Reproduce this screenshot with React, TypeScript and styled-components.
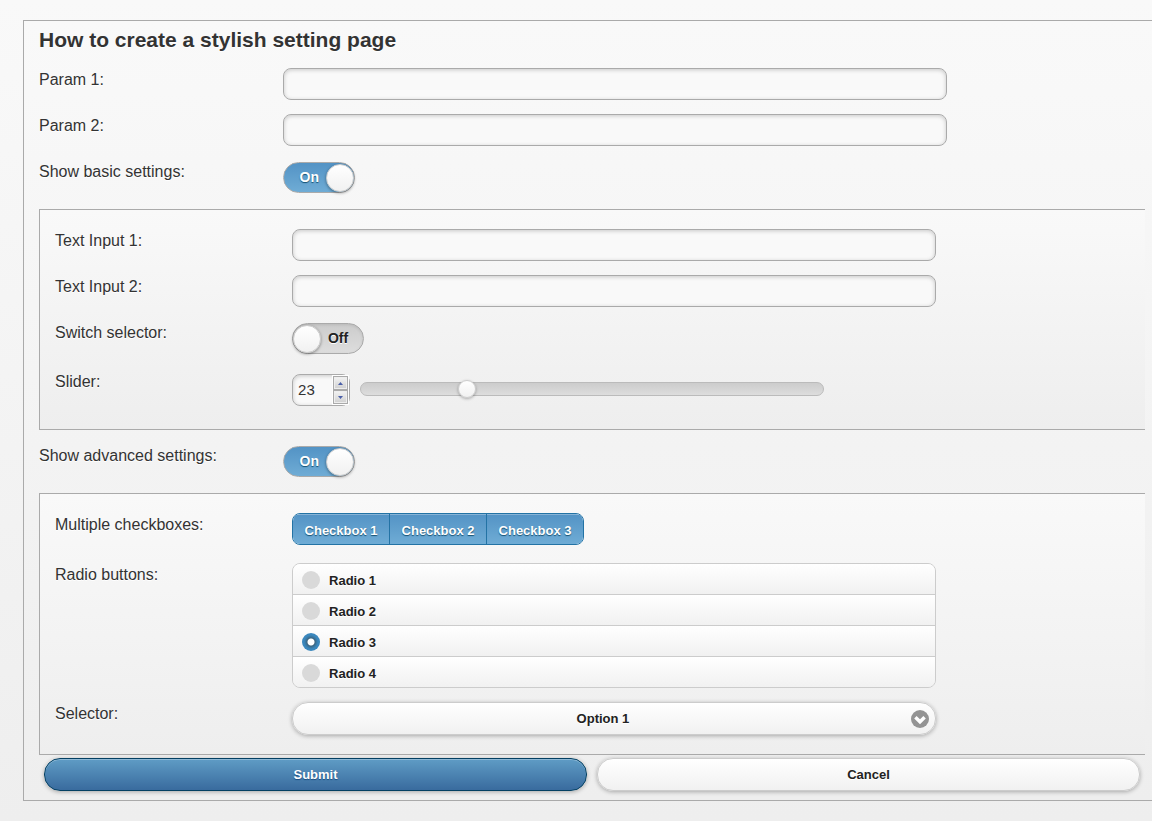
import React, { useId, useState } from "react";
import styled, { createGlobalStyle } from "styled-components";

const GlobalStyle = createGlobalStyle`
  *, *::before, *::after { box-sizing: border-box; }
  html { min-height: 100%; background: linear-gradient(#f9f9f9, #eeeeee); }
  body {
    margin: 0;
    color: #333;
    font-family: "Liberation Sans", Arial, Helvetica, sans-serif;
    font-size: 16px;
    line-height: 20px;
    text-shadow: 0 1px 0 #fff;
  }
  input, select, button { font-family: inherit; }
`;

const Page = styled.form`
  margin: 20px 0 20px 23px;
  padding: 0 7px 9px 15px;
  border: 1px solid #aaa;
  border-right: 0;
  background: linear-gradient(#f9f9f9, #eeeeee);
`;

const Title = styled.h1`
  margin: 0;
  padding: 7px 0 16px;
  font-size: 21px;
  line-height: 24px;
`;

const Panel = styled.section`
  display: grid;
  gap: 14px;
  margin: 14px 0;
  padding: 19px 17px 19px 15px;
  border: 1px solid #aaa;
  border-right: 0;
  background: linear-gradient(#f9f9f9, #eeeeee);

  &:last-of-type { margin-bottom: 3px; }
`;

const Rows = styled.div`
  display: grid;
  gap: 14px;
`;

const Row = styled.div<{ $spaced?: boolean }>`
  display: grid;
  grid-template-columns: 22% 60%;
  column-gap: 1px;
  align-items: start;
  padding-bottom: ${(p) => (p.$spaced ? "4px" : "0")};
`;

const Label = styled.label`
  padding-top: 2px;
`;

const TextInput = styled.input`
  width: 100%;
  height: 32px;
  padding: 0 6px;
  border: 1px solid #aaa;
  border-radius: 8px;
  background: #f9f9f9;
  box-shadow: inset 0 1px 4px rgba(0, 0, 0, 0.2);
  color: #333;
  font-size: 15px;
`;

const Switch = styled.label<{ $on: boolean }>`
  display: flex;
  flex-direction: ${(p) => (p.$on ? "row" : "row-reverse")};
  align-items: center;
  width: 72px;
  height: 31px;
  margin: 2px 0;
  border: 1px solid #aaa;
  border-radius: 16px;
  background: ${(p) => (p.$on ? "linear-gradient(#5393c5, #6facd5)" : "linear-gradient(#cccccc, #dddddd)")};
  box-shadow: ${(p) => (p.$on ? "none" : "inset 0 1px 3px rgba(0, 0, 0, 0.1)")};
  color: ${(p) => (p.$on ? "#fff" : "#222")};
  font-size: 14px;
  font-weight: bold;
  text-shadow: ${(p) => (p.$on ? "0 1px 1px #145072" : "0 1px 0 #fff")};
`;

const SwitchText = styled.span<{ $on: boolean }>`
  flex: 1;
  padding: ${(p) => (p.$on ? "0 0 2px 8px" : "0 8px 2px 0")};
  text-align: center;
`;

const SwitchKnob = styled.input`
  appearance: none;
  width: 28px;
  height: 28px;
  margin: 0;
  border: 1px solid #ccc;
  border-radius: 50%;
  background: linear-gradient(#ffffff, #f1f1f1);
  box-shadow: 0 1px 3px rgba(0, 0, 0, 0.4);
`;

const SliderControl = styled.div`
  display: flex;
  align-items: center;
  gap: 10px;
  padding-top: 4px;
  padding-bottom: 4px;
`;

const NumberBox = styled.div`
  display: flex;
  align-items: center;
  flex: none;
  width: 58px;
  height: 32px;
  border: 1px solid #aaa;
  border-radius: 8px;
  background: #f9f9f9;
  box-shadow: inset 0 1px 4px rgba(0, 0, 0, 0.2);
`;

const NumberInput = styled.input`
  appearance: textfield;
  flex: 1;
  min-width: 0;
  padding: 0 0 2px 5px;
  border: 0;
  background: none;
  color: #333;
  font-size: 15px;

  &::-webkit-inner-spin-button { appearance: none; }
`;

const Stepper = styled.div`
  display: grid;
  grid-template-rows: 14px 14px;
  width: 17px;
  padding: 1px;
  background: #fff;
`;

const StepButton = styled.button`
  display: flex;
  align-items: center;
  justify-content: center;
  padding: 0;
  border: 1px solid #aaa;
  background: linear-gradient(#f4f4f4, #cfcfcf);
  box-shadow: inset 0 0 0 1px #eee;
`;

const SliderTrack = styled.div`
  display: flex;
  align-items: center;
  width: 72%;
  height: 14px;
  margin-bottom: 2px;
  border: 1px solid #bbb;
  border-radius: 7px;
  background: linear-gradient(#cccccc, #dddddd);
`;

const SliderInput = styled.input`
  appearance: none;
  flex: 1;
  height: 18px;
  margin: 0 -9px;
  background: none;

  &::-webkit-slider-thumb {
    appearance: none;
    width: 18px;
    height: 18px;
    border: 1px solid #ccc;
    border-radius: 50%;
    background: linear-gradient(#ffffff, #f1f1f1);
    box-shadow: 0 1px 3px rgba(0, 0, 0, 0.3);
  }
`;

const CheckGroup = styled.div`
  display: inline-flex;
  justify-self: start;
  height: 32px;
  overflow: hidden;
  border: 1px solid #2373a5;
  border-radius: 8px;
`;

const CheckButton = styled.label<{ $checked: boolean }>`
  display: flex;
  align-items: center;
  justify-content: center;
  position: relative;
  width: 97px;
  padding-top: 3px;
  background: ${(p) => (p.$checked ? "linear-gradient(#5393c5, #6facd5)" : "linear-gradient(#ffffff, #f1f1f1)")};
  box-shadow: inset 0 1px 0 rgba(255, 255, 255, 0.3);
  color: ${(p) => (p.$checked ? "#fff" : "#222")};
  font-size: 13px;
  font-weight: bold;
  text-shadow: ${(p) => (p.$checked ? "0 1px 1px #145072" : "0 1px 0 #fff")};

  & + & { border-left: 1px solid #2373a5; }
  &:first-child { width: 96px; }
`;

const HiddenCheck = styled.input`
  position: absolute;
  inset: 0;
  margin: 0;
  opacity: 0;
`;

const RadioGroup = styled.div`
  overflow: hidden;
  border: 1px solid #ccc;
  border-radius: 8px;
`;

const RadioRow = styled.label`
  display: flex;
  align-items: center;
  gap: 9px;
  height: 31px;
  padding: 2px 9px 0;
  background: linear-gradient(#ffffff, #f1f1f1);
  color: #222;
  font-size: 13px;
  font-weight: bold;

  & + & { border-top: 1px solid #ccc; }
  &:first-child { height: 30px; }
`;

const RadioText = styled.span`
  padding-top: 1px;
`;

const RadioInput = styled.input`
  appearance: none;
  width: 18px;
  height: 18px;
  margin: 0;
  border-radius: 50%;
  background: #d9d9d9;

  &:checked {
    background: radial-gradient(circle, #fff 3px, #3a6480 4px, #3a7399 5px, #3a87bd 7px);
  }
`;

const SelectWrap = styled.div`
  display: grid;
  align-items: center;
`;

const Select = styled.select`
  appearance: none;
  grid-area: 1 / 1;
  width: 100%;
  height: 33px;
  padding: 0 28px 1px 6px;
  border: 1px solid #ccc;
  border-radius: 16px;
  background: linear-gradient(#ffffff, #f1f1f1);
  box-shadow: 0 1px 4px rgba(0, 0, 0, 0.3);
  color: #222;
  font-size: 13px;
  font-weight: bold;
  text-align: center;
  text-align-last: center;
  text-shadow: inherit;
`;

const SelectIcon = styled.svg`
  grid-area: 1 / 1;
  justify-self: end;
  margin-right: 7px;
  pointer-events: none;
`;

const Actions = styled.div`
  display: grid;
  grid-template-columns: 1fr 1fr;
  gap: 10px;
  padding: 0 5px;
`;

const ActionButton = styled.button<{ $primary?: boolean }>`
  height: 33px;
  padding: 0;
  border: 1px solid ${(p) => (p.$primary ? "#044062" : "#ccc")};
  border-radius: 16px;
  background: ${(p) => (p.$primary ? "linear-gradient(#5f9cc5, #396b9e)" : "linear-gradient(#ffffff, #f1f1f1)")};
  box-shadow: inset 0 1px 0 rgba(255, 255, 255, 0.3), 0 1px 4px rgba(0, 0, 0, 0.3);
  color: ${(p) => (p.$primary ? "#fff" : "#222")};
  font-size: 13px;
  font-weight: bold;
  text-shadow: ${(p) => (p.$primary ? "0 1px 1px #194b7e" : "0 1px 0 #fff")};
`;

function TextField({ label }: { label: string }) {
  const id = useId();
  return (
    <Row>
      <Label htmlFor={id}>{label}</Label>
      <TextInput id={id} type="text" />
    </Row>
  );
}

function SwitchField({ label, initial }: { label: string; initial: boolean }) {
  const id = useId();
  const [on, setOn] = useState(initial);
  return (
    <Row>
      <Label htmlFor={id}>{label}</Label>
      <Switch $on={on}>
        <SwitchText $on={on}>{on ? "On" : "Off"}</SwitchText>
        <SwitchKnob id={id} type="checkbox" role="switch" checked={on} onChange={() => setOn(!on)} />
      </Switch>
    </Row>
  );
}

function SliderField() {
  const id = useId();
  const [value, setValue] = useState(23);
  const update = (next: number) => setValue(Math.max(0, Math.min(100, next)));
  return (
    <Row>
      <Label htmlFor={id}>Slider:</Label>
      <SliderControl>
        <NumberBox>
          <NumberInput id={id} type="number" value={value} onChange={(e) => update(Number(e.target.value))} />
          <Stepper>
            <StepButton type="button" aria-label="Increase" onClick={() => update(value + 1)}>
              <svg width="5" height="3" viewBox="0 0 5 3"><path d="M0 3 2.5 0 5 3z" fill="#4a5fa8" /></svg>
            </StepButton>
            <StepButton type="button" aria-label="Decrease" onClick={() => update(value - 1)}>
              <svg width="5" height="3" viewBox="0 0 5 3"><path d="M0 0 2.5 3 5 0z" fill="#4a5fa8" /></svg>
            </StepButton>
          </Stepper>
        </NumberBox>
        <SliderTrack>
          <SliderInput
            type="range"
            aria-label="Slider"
            min={0}
            max={100}
            value={value}
            onChange={(e) => update(Number(e.target.value))}
          />
        </SliderTrack>
      </SliderControl>
    </Row>
  );
}

function CheckboxField() {
  const id = useId();
  const [checked, setChecked] = useState([true, true, true]);
  return (
    <Row $spaced>
      <Label as="span" id={id}>Multiple checkboxes:</Label>
      <CheckGroup role="group" aria-labelledby={id}>
        {checked.map((c, i) => (
          <CheckButton key={i} $checked={c}>
            <HiddenCheck
              type="checkbox"
              checked={c}
              onChange={() => setChecked(checked.map((v, j) => (j === i ? !v : v)))}
            />
            {`Checkbox ${i + 1}`}
          </CheckButton>
        ))}
      </CheckGroup>
    </Row>
  );
}

function RadioField() {
  const id = useId();
  return (
    <Row>
      <Label as="span" id={id}>Radio buttons:</Label>
      <RadioGroup role="radiogroup" aria-labelledby={id}>
        {[1, 2, 3, 4].map((n) => (
          <RadioRow key={n}>
            <RadioInput type="radio" name="radio" value={n} defaultChecked={n === 3} />
            <RadioText>{`Radio ${n}`}</RadioText>
          </RadioRow>
        ))}
      </RadioGroup>
    </Row>
  );
}

function SelectField() {
  const id = useId();
  return (
    <Row>
      <Label htmlFor={id}>Selector:</Label>
      <SelectWrap>
        <Select id={id} defaultValue="1">
          <option value="1">Option 1</option>
        </Select>
        <SelectIcon width="18" height="18" viewBox="0 0 18 18" aria-hidden="true">
          <circle cx="9" cy="9" r="9" fill="#949494" />
          <path d="M4.4 7.2 9 11.8l4.6-4.6" fill="none" stroke="#fff" strokeWidth="3.4" />
        </SelectIcon>
      </SelectWrap>
    </Row>
  );
}

export default function App() {
  return (
    <>
      <GlobalStyle />
      <Page onSubmit={(e) => e.preventDefault()}>
        <Title>How to create a stylish setting page</Title>
        <Rows>
          <TextField label="Param 1:" />
          <TextField label="Param 2:" />
          <SwitchField label="Show basic settings:" initial />
        </Rows>
        <Panel>
          <TextField label="Text Input 1:" />
          <TextField label="Text Input 2:" />
          <SwitchField label="Switch selector:" initial={false} />
          <SliderField />
        </Panel>
        <SwitchField label="Show advanced settings:" initial />
        <Panel>
          <CheckboxField />
          <RadioField />
          <SelectField />
        </Panel>
        <Actions>
          <ActionButton type="submit" $primary>Submit</ActionButton>
          <ActionButton type="button">Cancel</ActionButton>
        </Actions>
      </Page>
    </>
  );
}
